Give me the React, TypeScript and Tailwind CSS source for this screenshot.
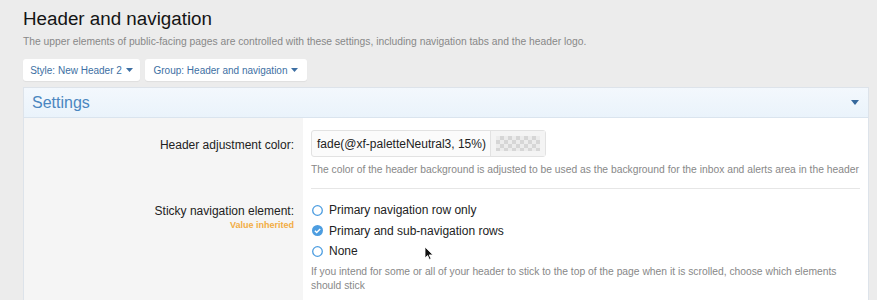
const radios = [
  { label: 'Primary navigation row only', checked: false },
  { label: 'Primary and sub-navigation rows', checked: true },
  { label: 'None', checked: false },
];

function Caret({ className = '', w = 7, h = 4 }: { className?: string; w?: number; h?: number }) {
  return (
    <svg width={w} height={h} viewBox={`0 0 ${w} ${h}`} className={className}>
      <path d={`M0 0h${w}L${w / 2} ${h}z`} fill="currentColor" />
    </svg>
  );
}

function Radio({ checked }: { checked: boolean }) {
  if (checked) {
    return (
      <svg width="11" height="11" viewBox="0 0 11 11" className="shrink-0">
        <circle cx="5.5" cy="5.5" r="5.5" fill="#4d9de0" />
        <path d="M2.9 5.7l1.8 1.8 3.5-3.5" stroke="#fff" strokeWidth="1.5" fill="none" />
      </svg>
    );
  }
  return (
    <svg width="11" height="11" viewBox="0 0 11 11" className="shrink-0">
      <circle cx="5.5" cy="5.5" r="4.8" fill="#fff" stroke="#4d9de0" strokeWidth="1.3" />
    </svg>
  );
}

export default function App() {
  return (
    <div className="relative w-[877px] h-[300px] overflow-hidden bg-[#ececec] font-['Liberation_Sans',Arial,sans-serif]">
      <div className="pl-[23px] pr-[8px] pt-[7px]">
        {/* Page title */}
        <h1 className="text-[18.8px] leading-[24px] text-[#141414]">Header and navigation</h1>
        <p className="mt-[4px] text-[10.3px] leading-[14px] text-[#888]">
          The upper elements of public-facing pages are controlled with these settings, including navigation tabs and the header logo.
        </p>

        {/* Filter buttons */}
        <div className="mt-[10px] flex gap-[5px]">
          <button className="h-[22px] w-[117px] rounded-[3px] bg-white flex items-center justify-center gap-[4px] text-[10px] text-[#3d6fa3] shadow-[0_1px_1px_rgba(0,0,0,0.06)]">
            Style: New Header 2 <Caret />
          </button>
          <button className="h-[22px] w-[162px] rounded-[3px] bg-white flex items-center justify-center gap-[4px] text-[10px] text-[#3d6fa3] shadow-[0_1px_1px_rgba(0,0,0,0.06)]">
            Group: Header and navigation <Caret />
          </button>
        </div>

        {/* Settings block */}
        <div className="mt-[6px] border border-[#dde3ea] bg-white">
          <div className="h-[30px] flex items-center justify-between pl-[8px] pr-[9px] bg-gradient-to-b from-[#f3f8fd] to-[#eaf3fb] border-b border-[#dae4ee]">
            <span className="text-[16px] text-[#4a86c0]">Settings</span>
            <Caret w={8} h={5} className="text-[#36689c]" />
          </div>

          {/* Row 1 */}
          <div className="flex">
            <div className="w-[279px] shrink-0 bg-[#f5f5f5] pr-[9px] pt-[20px] text-right text-[12px] leading-[14px] text-[#222]">
              Header adjustment color:
            </div>
            <div className="flex-1 px-[8px] pt-[12px]">
              <div className="border-b border-[#e6e6e6] pb-[11px]">
                <div className="flex h-[27px] w-[235px] rounded-[3px] border border-[#e2e2e2] bg-[#fbfbfb]">
                  <div className="flex-1 flex items-center pl-[5px] text-[12px] text-[#222]">fade(@xf-paletteNeutral3, 15%)</div>
                  <div className="w-[55px] border-l border-[#e2e2e2] bg-[#f4f4f4] flex items-center justify-center">
                    <div className="w-[44px] h-[15px] bg-[repeating-conic-gradient(#d6d6d6_0%_25%,#ececec_0%_50%)] bg-[length:8px_8px]" />
                  </div>
                </div>
                <p className="mt-[6px] text-[10.3px] leading-[14px] text-[#888]">
                  The color of the header background is adjusted to be used as the background for the inbox and alerts area in the header
                </p>
              </div>
            </div>
          </div>

          {/* Row 2 */}
          <div className="flex h-[120px]">
            <div className="w-[279px] shrink-0 bg-[#f5f5f5] pr-[9px] pt-[15px] text-right">
              <div className="text-[12px] leading-[14px] text-[#222]">Sticky navigation element:</div>
              <div className="mt-[1px] text-[9px] leading-[12px] font-bold text-[#f2ac44]">Value inherited</div>
            </div>
            <div className="flex-1 px-[8px] pt-[11px]">
              <div className="flex flex-col">
                {radios.map((r) => (
                  <label key={r.label} className="flex h-[20.5px] items-center gap-[6px] pl-[1px] text-[12px] text-[#222]">
                    <Radio checked={r.checked} />
                    {r.label}
                  </label>
                ))}
              </div>
              <p className="mt-[3px] text-[10.3px] leading-[14px] text-[#888]">
                If you intend for some or all of your header to stick to the top of the page when it is scrolled, choose which elements should stick
              </p>
            </div>
          </div>
        </div>
      </div>

      {/* Mouse pointer */}
      <svg width="10" height="15" viewBox="0 0 10 15" className="absolute left-[424px] top-[246px]">
        <path d="M1 1v11l2.6-2.5 1.8 4 1.6-.7-1.8-3.9H9z" fill="#111" stroke="#fff" strokeWidth="0.8" />
      </svg>
    </div>
  );
}
